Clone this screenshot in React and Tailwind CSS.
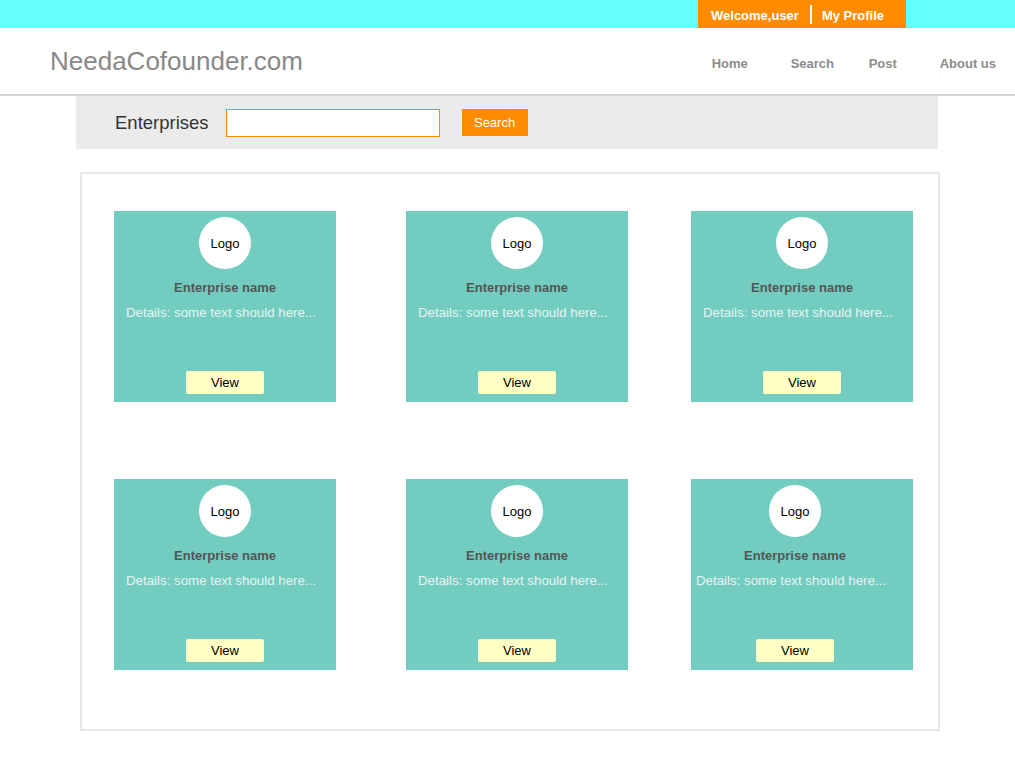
const cards = [
  { id: 1, shift: false },
  { id: 2, shift: false },
  { id: 3, shift: false },
  { id: 4, shift: false },
  { id: 5, shift: false },
  { id: 6, shift: true },
];

function Card({ shift }) {
  return (
    <div className="w-[222px] h-[191px] bg-[#72ccc0] flex">
      <div className={`flex flex-col items-center w-full ${shift ? "pr-[14px]" : ""}`}>
        <div className="mt-[6px] size-[52px] rounded-full bg-white flex items-center justify-center text-[13px] text-black">
          <span className="mt-[1px]">Logo</span>
        </div>
        <div className="mt-[11px] text-[13px] leading-4 font-bold text-[#555]">Enterprise name</div>
        <div
          className={`mt-[9px] w-full text-[13.3px] leading-4 text-[#e8f4f1] whitespace-nowrap ${
            shift ? "pl-[5px]" : "pl-[12px]"
          }`}
        >
          Details: some text should here...
        </div>
        <button className="mt-auto mb-[8px] w-[78px] h-[23px] rounded-[2px] bg-[#ffffc6] text-[13px] text-black">
          View
        </button>
      </div>
    </div>
  );
}

function Row({ items, top }) {
  return (
    <div className={`flex ${top}`}>
      <div className="ml-[32px]">
        <Card {...items[0]} />
      </div>
      <div className="ml-[70px]">
        <Card {...items[1]} />
      </div>
      <div className="ml-[63px]">
        <Card {...items[2]} />
      </div>
    </div>
  );
}

export default function App() {
  return (
    <div className="w-[1015px] min-h-[762px] bg-white font-['Liberation_Sans',Arial,sans-serif]">
      {/* TOP STRIP */}
      <div className="h-[28px] bg-[#66ffff] flex">
        <div className="ml-[698px] w-[208px] h-full bg-[#ff8c00] flex items-center text-[13px] font-bold text-white">
          <span className="ml-[13px] mt-[3px]">Welcome,user</span>
          <span className="ml-[11px] w-[2px] h-[19px] bg-white mt-[1px]"></span>
          <span className="ml-[10px] mt-[3px]">My Profile</span>
        </div>
      </div>

      {/* HEADER */}
      <div className="h-[68px] border-b-2 border-[#d6d6d6] flex items-center">
        <span className="ml-[50px] mt-[1px] text-[26px] text-[#888]">NeedaCofounder.com</span>
        <nav className="ml-auto flex items-center text-[13px] font-bold text-[#8c8c8c] mt-[6px]">
          <a className="w-[79px]">Home</a>
          <a className="w-[78px]">Search</a>
          <a className="w-[71px]">Post</a>
          <a className="pr-[19px]">About us</a>
        </nav>
      </div>

      {/* SEARCH PANEL */}
      <div className="ml-[76px] w-[862px] h-[53px] bg-[#ebebeb] flex items-center">
        <span className="ml-[39px] text-[18.5px] text-[#333] mt-[1px]">Enterprises</span>
        <input className="ml-[17px] w-[214px] h-[28px] bg-white border border-[#ff8c00] outline-none" />
        <button className="ml-[22px] w-[66px] h-[27px] bg-[#ff8c00] text-white text-[13px]">Search</button>
      </div>

      {/* LIST */}
      <div className="mt-[23px] ml-[80px] w-[860px] h-[559px] border-2 border-[#e8e8e8]">
        <Row items={cards.slice(0, 3)} top="mt-[37px]" />
        <Row items={cards.slice(3, 6)} top="mt-[77px]" />
      </div>
    </div>
  );
}
